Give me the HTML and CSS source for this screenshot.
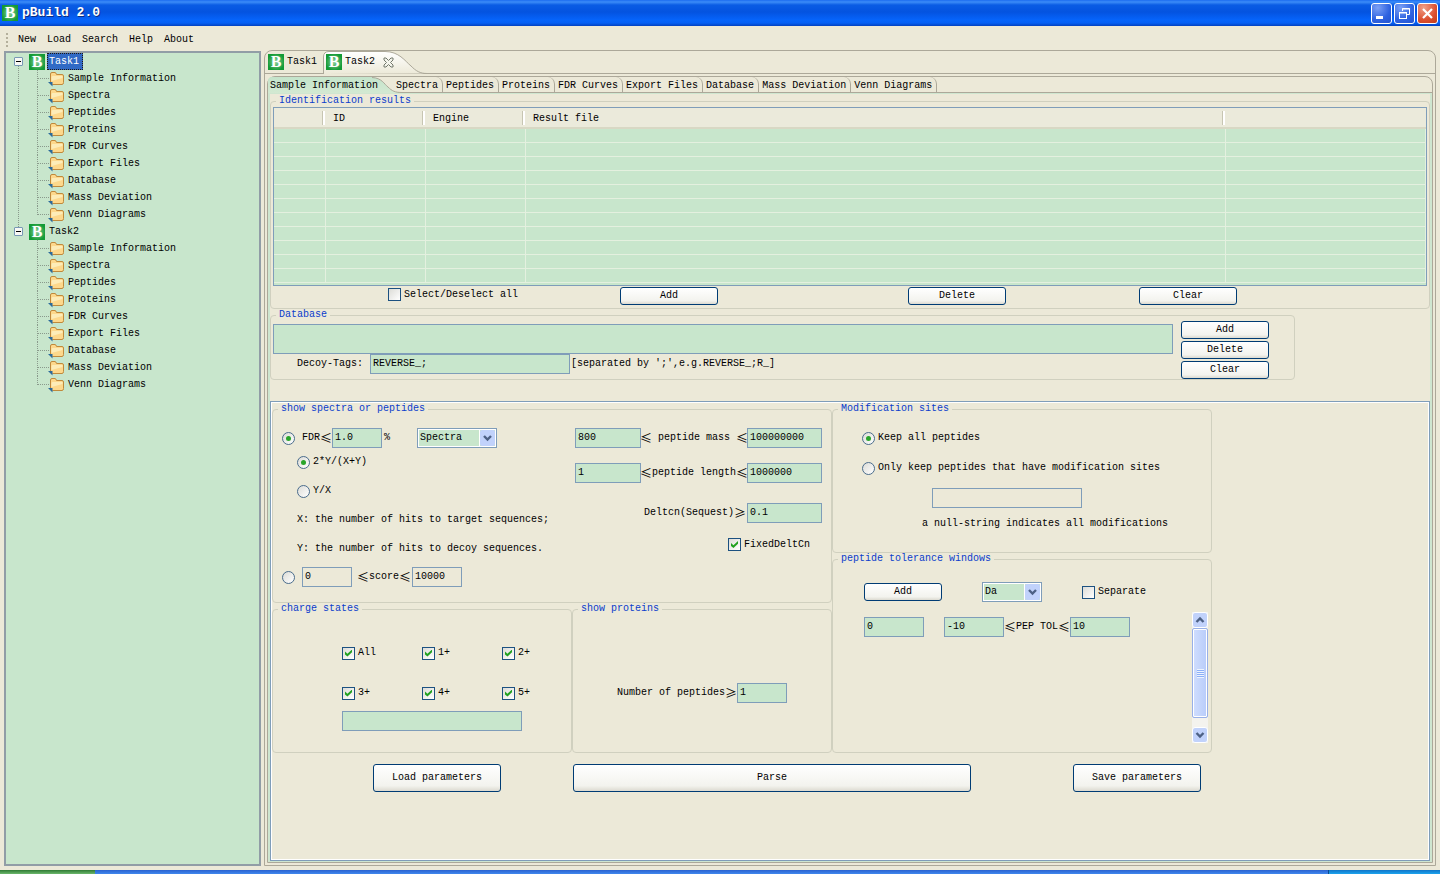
FILE: index.html
```html
<!DOCTYPE html>
<html lang="en">
<head>
    <meta charset="UTF-8">
    <meta name="viewport" content="width=device-width, initial-scale=1.0">
    <title>pBuild 2.0</title>
    <link rel="stylesheet" href="styles.css">
</head>
<body>
    <header class="titlebar">
        <span class="logo">B</span>
        <h1>pBuild 2.0</h1>
        <div class="window-buttons">
            <button type="button" aria-label="Minimize">
                <svg width="19" height="19" viewBox="0 0 19 19"><rect x="4" y="12" width="7" height="3" fill="#fff"/></svg>
            </button>
            <button type="button" aria-label="Restore">
                <svg width="19" height="19" viewBox="0 0 19 19" fill="none" stroke="#fff"><path d="M7.5 7V4.5H14.5V10.5H12M7 5H15" /><rect x="4.500" y="8.500" width="7" height="6"/><path d="M4 9H12"/></svg>
            </button>
            <button type="button" class="close" aria-label="Close">
                <svg width="19" height="19" viewBox="0 0 19 19"><path d="M5 5L14 14M14 5L5 14" stroke="#fff" stroke-width="2.200"/></svg>
            </button>
        </div>
    </header>

    <nav class="menubar">
        <button type="button">New</button>
        <button type="button">Load</button>
        <button type="button">Search</button>
        <button type="button">Help</button>
        <button type="button">About</button>
    </nav>

    <main class="workspace">
        <aside class="tree">
            <ul id="task-tree"></ul>
        </aside>

        <section class="editor">
            <div class="editor-tabs">
                <button type="button" class="editor-tab"><span class="logo">B</span><span>Task1</span></button>
                <button type="button" class="editor-tab active">
                    <svg class="tab-shape" width="104" height="23" viewBox="0 0 104 23">
                        <defs><linearGradient id="tab-fill" x1="0" y1="0" x2="0" y2="1"><stop offset="0" stop-color="#fff"/><stop offset="1" stop-color="#ece9d8"/></linearGradient></defs>
                        <path d="M0.500 23V6Q0.500 0.500 6 0.500H62C76 0.500 82 10 88 15C93 20 97 22.500 104 22.500" fill="url(#tab-fill)" stroke="#aca899"/>
                    </svg>
                    <span class="logo">B</span><span>Task2</span>
                    <svg class="tab-close" width="11" height="11" viewBox="0 0 11 11"><path d="M1 1H3L5.500 3.500L8 1H10V3L7.500 5.500L10 8V10H8L5.500 7.500L3 10H1V8L3.500 5.500L1 3Z" fill="#f4f4ec" stroke="#72786c"/></svg>
                </button>
            </div>

            <div class="pages">
                <div class="page-tabs">
                    <button type="button" class="page-tab active">
                        <svg class="tab-shape" width="134" height="16" viewBox="0 0 134 16">
                            <defs><linearGradient id="page-fill" x1="0" y1="0" x2="0" y2="1"><stop offset="0" stop-color="#c4e4cb"/><stop offset="1" stop-color="#d3e9d2"/></linearGradient></defs>
                            <path d="M0 16V4Q0 0 4 0H104C114 1 116 7 120 10C124 14 127 15.500 134 15.500V16Z" fill="url(#page-fill)"/>
                            <path d="M104 0.500C114 1 116 7 120 10C124 14 127 15.500 134 15.500" fill="none" stroke="#aca899"/>
                        </svg>
                        <span>Sample Information</span>
                    </button>
                    <button type="button" class="page-tab">Spectra</button>
                    <button type="button" class="page-tab">Peptides</button>
                    <button type="button" class="page-tab">Proteins</button>
                    <button type="button" class="page-tab">FDR Curves</button>
                    <button type="button" class="page-tab">Export Files</button>
                    <button type="button" class="page-tab">Database</button>
                    <button type="button" class="page-tab">Mass Deviation</button>
                    <button type="button" class="page-tab">Venn Diagrams</button>
                </div>

                <div class="page">
                    <fieldset>
                        <legend>Identification results</legend>
                        <div class="results">
                            <div class="table-box">
                                <table>
                                    <colgroup>
                                        <col class="col-check"><col class="col-id"><col class="col-engine"><col class="col-file"><col>
                                    </colgroup>
                                    <thead>
                                        <tr><th></th><th>ID</th><th>Engine</th><th>Result file</th><th></th></tr>
                                    </thead>
                                    <tbody id="result-rows"></tbody>
                                </table>
                            </div>
                            <div class="result-actions">
                                <label class="check"><input type="checkbox">Select/Deselect all</label>
                                <button type="button" class="btn">Add</button>
                                <button type="button" class="btn">Delete</button>
                                <button type="button" class="btn">Clear</button>
                            </div>
                        </div>
                    </fieldset>

                    <fieldset class="database-group">
                        <legend>Database</legend>
                        <div class="database">
                            <div class="database-main">
                                <div class="database-list"></div>
                                <div class="decoy">
                                    <label for="decoy-tags">Decoy-Tags:</label>
                                    <input type="text" id="decoy-tags" value="REVERSE_;">
                                    <span class="hint">[separated by ';',e.g.REVERSE_;R_]</span>
                                </div>
                            </div>
                            <div class="database-buttons">
                                <button type="button" class="btn">Add</button>
                                <button type="button" class="btn">Delete</button>
                                <button type="button" class="btn">Clear</button>
                            </div>
                        </div>
                    </fieldset>

                    <form class="params">
                        <div class="groups">
                            <div class="groups-left">
                                <fieldset>
                                    <legend>show spectra or peptides</legend>
                                    <div class="spectra">
                                        <div class="filter">
                                            <div class="row">
                                                <input type="radio" name="filter" id="by-fdr" checked>
                                                <label for="by-fdr" class="fdr-label">FDR<span class="sign">≤</span></label>
                                                <input type="text" class="w50" value="1.0" aria-label="FDR">
                                                <span class="percent">%</span>
                                                <span class="combo combo-spectra">
                                                    <select aria-label="Level"><option>Spectra</option><option>Peptides</option></select>
                                                    <svg width="15" height="16" viewBox="0 0 15 16"><rect width="15" height="16" rx="2" fill="#c1d2fb"/><path d="M4 6L7.500 9.500L11 6" fill="none" stroke="#4d6185" stroke-width="2.400"/></svg>
                                                </span>
                                            </div>
                                            <div class="formula">
                                                <label class="check"><input type="radio" name="formula" checked>2*Y/(X+Y)</label>
                                                <label class="check"><input type="radio" name="formula">Y/X</label>
                                                <p>X: the number of hits to target sequences;</p>
                                                <p>Y: the number of hits to decoy sequences.</p>
                                            </div>
                                            <div class="row score">
                                                <input type="radio" name="filter" id="by-score" aria-label="Filter by score">
                                                <input type="text" class="w50 off" value="0" aria-label="Lowest score">
                                                <label for="by-score"><span class="sign">≤</span>score<span class="sign">≤</span></label>
                                                <input type="text" class="w50 off" value="10000" aria-label="Highest score">
                                            </div>
                                        </div>
                                        <div class="ranges">
                                            <div class="range">
                                                <input type="text" class="w66" id="mass-min" value="800">
                                                <label for="mass-min"><span class="sign">≤</span> peptide mass <span class="sign">≤</span></label>
                                                <input type="text" class="w75" value="100000000" aria-label="Highest peptide mass">
                                            </div>
                                            <div class="range">
                                                <input type="text" class="w66" id="length-min" value="1">
                                                <label for="length-min"><span class="sign">≤</span>peptide length<span class="sign">≤</span></label>
                                                <input type="text" class="w75" value="1000000" aria-label="Highest peptide length">
                                            </div>
                                            <div class="range deltcn">
                                                <label for="deltcn">Deltcn(Sequest)<span class="sign">≥</span></label>
                                                <input type="text" class="w75" id="deltcn" value="0.1">
                                            </div>
                                            <label class="check fixed"><input type="checkbox" checked>FixedDeltCn</label>
                                        </div>
                                    </div>
                                </fieldset>

                                <div class="groups-bottom">
                                    <fieldset class="charge-group">
                                        <legend>charge states</legend>
                                        <div class="charge">
                                            <div class="charge-grid">
                                                <label class="check"><input type="checkbox" checked>All</label>
                                                <label class="check"><input type="checkbox" checked>1+</label>
                                                <label class="check"><input type="checkbox" checked>2+</label>
                                                <label class="check"><input type="checkbox" checked>3+</label>
                                                <label class="check"><input type="checkbox" checked>4+</label>
                                                <label class="check"><input type="checkbox" checked>5+</label>
                                            </div>
                                            <input type="text" class="charge-other" aria-label="Other charge states">
                                        </div>
                                    </fieldset>
                                    <fieldset class="protein-group">
                                        <legend>show proteins</legend>
                                        <div class="proteins">
                                            <div class="row">
                                                <label for="peptide-count">Number of peptides<span class="sign">≥</span></label>
                                                <input type="text" class="w50" id="peptide-count" value="1">
                                            </div>
                                        </div>
                                    </fieldset>
                                </div>
                            </div>

                            <div class="groups-right">
                                <fieldset>
                                    <legend>Modification sites</legend>
                                    <div class="modification">
                                        <label class="check"><input type="radio" name="sites" checked>Keep all peptides</label>
                                        <label class="check"><input type="radio" name="sites">Only keep peptides that have modification sites</label>
                                        <input type="text" class="site-name off" aria-label="Modification sites">
                                        <p>a null-string indicates all modifications</p>
                                    </div>
                                </fieldset>
                                <fieldset>
                                    <legend>peptide tolerance windows</legend>
                                    <div class="tolerance">
                                        <div class="tolerance-body">
                                            <div class="row tolerance-head">
                                                <button type="button" class="btn">Add</button>
                                                <span class="combo combo-unit">
                                                    <select aria-label="Unit"><option>Da</option><option>ppm</option></select>
                                                    <svg width="15" height="16" viewBox="0 0 15 16"><rect width="15" height="16" rx="2" fill="#c1d2fb"/><path d="M4 6L7.500 9.500L11 6" fill="none" stroke="#4d6185" stroke-width="2.400"/></svg>
                                                </span>
                                                <label class="check"><input type="checkbox">Separate</label>
                                            </div>
                                            <div class="row">
                                                <input type="text" class="w60 window-id" value="0" aria-label="Window">
                                                <input type="text" class="w60" id="tol-min" value="-10">
                                                <label for="tol-min"><span class="sign">≤</span>PEP TOL<span class="sign">≤</span></label>
                                                <input type="text" class="w60" value="10" aria-label="Upper tolerance">
                                            </div>
                                        </div>
                                        <div class="scrollbar">
                                            <button type="button" aria-label="Scroll up"><svg width="14" height="14" viewBox="0 0 14 14"><path d="M3.500 9L7 5.500L10.500 9" fill="none" stroke="#4d6185" stroke-width="2.400"/></svg></button>
                                            <div class="thumb"><i></i></div>
                                            <button type="button" aria-label="Scroll down"><svg width="14" height="14" viewBox="0 0 14 14"><path d="M3.500 5L7 8.500L10.500 5" fill="none" stroke="#4d6185" stroke-width="2.400"/></svg></button>
                                        </div>
                                    </div>
                                </fieldset>
                            </div>
                        </div>

                        <div class="param-buttons">
                            <button type="button" class="btn">Load parameters</button>
                            <button type="button" class="btn parse">Parse</button>
                            <button type="button" class="btn">Save parameters</button>
                        </div>
                    </form>
                </div>
            </div>
        </section>
    </main>

    <footer class="taskbar"><span class="start"></span><span class="tray"></span></footer>

    <script src="app.js"></script>
</body>
</html>
```

FILE: styles.css
```css
* {
    box-sizing: border-box;
}

body {
    margin: 0;
    height: 100vh;
    display: flex;
    flex-direction: column;
    overflow: hidden;
    background: #ece9d8;
    color: #000;
    font: 10px/12px "Liberation Mono", "Noto Sans CJK SC", monospace;
}

button, input, select {
    font: inherit;
    color: inherit;
    margin: 0;
}

button {
    padding: 0;
    border: none;
    background: none;
}

p {
    margin: 0;
}

svg {
    display: block;
}

/* Title bar */
.titlebar {
    display: flex;
    align-items: center;
    height: 26px;
    flex: none;
    padding: 0 2px;
    background: linear-gradient(#1c6cf0 0, #3c8cf8 2px, #0a5ce4 5px, #0453e0 12px, #0664fb 20px, #0560f4 23px, #0341c0 26px);
}

.titlebar h1 {
    margin: 0 auto 0 4px;
    color: #fff;
    font-size: 13px;
    line-height: 16px;
    text-shadow: 1px 1px #0a2c80;
}

.logo {
    flex: none;
    width: 16px;
    height: 16px;
    background: radial-gradient(#8fd09a, #139a35 75%);
    color: #fff;
    font: bold 16px/16px "Liberation Serif", serif;
    text-align: center;
}

.window-buttons {
    display: flex;
    gap: 2px;
}

.window-buttons button {
    border: 1px solid #fff;
    border-radius: 3px;
    background: radial-gradient(circle at 30% 20%, #7ba0f5, #2e62e0 60%, #2353cf);
}

.window-buttons .close {
    background: radial-gradient(circle at 30% 20%, #f0a088, #dc5030 60%, #c03c18);
}

/* Menu */
.menubar {
    display: flex;
    align-items: center;
    gap: 11px;
    height: 24px;
    flex: none;
    padding: 4px 0 0 18px;
    position: relative;
}

.menubar::before {
    content: "";
    position: absolute;
    left: 6px;
    top: 7px;
    width: 2px;
    height: 14px;
    background: repeating-linear-gradient(#b4b09c 0 2px, transparent 2px 4px);
}

.workspace {
    display: flex;
    flex: 1;
    min-height: 0;
    gap: 3px;
    padding: 0 4px 4px;
}

/* Task tree */
.tree {
    flex: none;
    width: 257px;
    margin-top: 1px;
    border: 2px solid #919da6;
    background: #c8e6cc;
}

.tree ul {
    margin: 0;
    padding: 0;
    list-style: none;
}

.task, .task li {
    position: relative;
}

.task-row {
    display: flex;
    align-items: center;
    height: 17px;
    padding-left: 8px;
}

.toggle {
    display: flex;
    width: 9px;
    height: 9px;
    margin-right: 6px;
    border: 1px solid #7898b5;
    border-radius: 1px;
    background: #f8f8f4;
    z-index: 1;
}

.toggle svg {
    margin: auto;
}

.task-row .name {
    margin-left: 2px;
    padding: 3px 4px 2px 2px;
}

.task-row .name.selected {
    outline: 1px dotted #201810;
    outline-offset: -1px;
    background: #316ac5;
    color: #fff;
}

.task:not(:last-child)::before {
    content: "";
    position: absolute;
    left: 12px;
    top: 10px;
    height: 100%;
    border-left: 1px dotted #8a9a8c;
}

.task li {
    display: flex;
    align-items: center;
    height: 17px;
    padding-left: 42px;
}

.task li svg {
    margin-right: 2px;
}

.task li::before {
    content: "";
    position: absolute;
    left: 31px;
    top: 0;
    height: 17px;
    border-left: 1px dotted #8a9a8c;
}

.task li:last-child::before {
    height: 9px;
}

.task li::after {
    content: "";
    position: absolute;
    left: 31px;
    top: 8px;
    width: 12px;
    border-top: 1px dotted #8a9a8c;
}

/* Editor tabs */
.editor {
    display: flex;
    flex: 1;
    flex-direction: column;
    min-width: 0;
    border: 1px solid #aca899;
    border-radius: 8px 8px 0 0;
}

.editor-tabs {
    display: flex;
    height: 23px;
    flex: none;
    padding-left: 2px;
    border-bottom: 1px solid #aca899;
}

.editor-tab {
    display: flex;
    align-items: center;
    gap: 3px;
    position: relative;
    padding: 0 6px 0 1px;
}

.editor-tab.active {
    padding-left: 3px;
}

.editor-tab > * {
    position: relative;
}

.tab-shape, .editor-tab > .tab-shape {
    position: absolute;
    left: 0;
    top: 0;
}

.tab-close {
    margin-left: 5px;
}

.pages {
    display: flex;
    flex: 1;
    flex-direction: column;
    min-height: 0;
    margin: 2px;
    border: 1px solid #aca899;
    border-radius: 8px 8px 0 0;
}

.page-tabs {
    display: flex;
    height: 16px;
    flex: none;
    border-bottom: 1px solid #aca899;
}

.page-tab {
    position: relative;
    padding: 2px 4px 0 3px;
    border-right: 1px solid #aca899;
    border-top-right-radius: 7px;
    white-space: nowrap;
}

.page-tab.active {
    padding: 2px 15px 0 2px;
    border: none;
}

.page-tab span {
    position: relative;
}

.page {
    display: flex;
    flex: 1;
    flex-direction: column;
    min-height: 0;
    padding-top: 1px;
    border: solid #cfe6d0;
    border-width: 1px 2px;
}

/* Group boxes */
fieldset {
    min-width: 0;
    margin: 0;
    padding: 0;
    border: 1px solid #d0d0bf;
    border-radius: 4px;
}

legend {
    margin-left: 5px;
    padding: 0 3px;
    color: #0a3ccc;
}

/* Controls */
input[type="text"] {
    flex: none;
    height: 20px;
    padding: 0 2px 2px;
    border: 1px solid #7f9db9;
    border-radius: 0;
    background: #c8e6cc;
}

input[type="text"].off {
    background: #ece9d8;
}

input[type="checkbox"], input[type="radio"] {
    appearance: none;
    display: grid;
    place-content: center;
    flex: none;
    width: 13px;
    height: 13px;
    border: 1px solid #1c5180;
    background: linear-gradient(135deg, #dcdcd7, #fff);
}

input[type="radio"] {
    border-color: #4a6c8c;
    border-radius: 50%;
}

input[type="checkbox"]:checked::after {
    content: "";
    width: 7px;
    height: 7px;
    background: #21a121;
    clip-path: polygon(0 30%, 35% 60%, 100% 0, 100% 40%, 35% 100%, 0 70%);
}

input[type="radio"]:checked::after {
    content: "";
    width: 5px;
    height: 5px;
    border-radius: 50%;
    background: #2aa52a;
}

.check, .row {
    display: flex;
    align-items: center;
}

.check {
    gap: 3px;
}

.row {
    height: 20px;
}

.row label, .range label {
    display: flex;
    align-items: center;
    white-space: pre;
}

.sign {
    width: 12px;
    font: 12px/12px "Noto Sans CJK SC", sans-serif;
    text-align: center;
}

.btn {
    width: 98px;
    height: 18px;
    border: 1px solid #003c74;
    border-radius: 3px;
    background: linear-gradient(#fff, #f3f3ee 80%, #dcdad0);
}

.combo {
    position: relative;
    height: 20px;
}

.combo select {
    appearance: none;
    width: 100%;
    height: 20px;
    padding: 0 2px;
    border: 1px solid #7f9db9;
    border-radius: 0;
    background: #c8e6cc;
    box-shadow: inset 0 0 0 1px #fff;
}

.combo svg {
    position: absolute;
    top: 2px;
    right: 2px;
    outline: 1px solid #fff;
    pointer-events: none;
}

.combo-spectra {
    width: 80px;
    margin-left: 27px;
}

.combo-unit {
    width: 60px;
}

.w50 {
    width: 50px;
}

.w60 {
    width: 60px;
}

.w66 {
    width: 66px;
}

.w75 {
    width: 75px;
}

/* Identification results */
.results {
    padding: 0 2px 3px;
}

.table-box {
    height: 179px;
    overflow: hidden;
    border: 1px solid #7f9db9;
    background: #c8e6cc;
}

table {
    width: 100%;
    table-layout: fixed;
    border-collapse: separate;
    border-spacing: 0;
}

.col-check {
    width: 52px;
}

.col-id, .col-engine {
    width: 100px;
}

.col-file {
    width: 700px;
}

th {
    position: relative;
    height: 21px;
    padding: 2px 0 0 7px;
    border-bottom: 2px solid #d8d8c4;
    background: #ebeadb;
    font-weight: normal;
    text-align: left;
}

th:not(:last-child)::after {
    content: "";
    position: absolute;
    top: 3px;
    right: 1px;
    width: 2px;
    height: 14px;
    border-left: 1px solid #c7c5b2;
    background: #fff;
}

td {
    height: 14px;
    padding: 0;
    border-right: 1px solid #e4f0df;
    border-bottom: 1px solid #e4f0df;
}

.result-actions {
    display: grid;
    grid-template-columns: 232px 288px 231px auto;
    height: 19px;
    padding: 1px 0 0 115px;
}

.result-actions .check {
    height: 15px;
}

/* Database */
.database-group {
    width: 1025px;
}

.database {
    display: flex;
    gap: 8px;
    padding-left: 2px;
}

.database-main {
    width: 900px;
}

.database-list {
    height: 30px;
    margin-top: 3px;
    border: 1px solid #7f9db9;
    background: #c8e6cc;
}

.decoy {
    display: flex;
    align-items: center;
    padding-left: 24px;
    white-space: nowrap;
}

.decoy input {
    width: 200px;
    margin: 0 1px 0 7px;
}

.database-buttons {
    display: flex;
    flex-direction: column;
    gap: 2px;
}

.database-buttons .btn {
    width: 88px;
}

/* Parameters */
.params {
    flex: 1;
    margin-top: 21px;
    padding: 1px 0 0 1px;
    border: 1px solid #7f9db9;
    box-shadow: inset 0 0 0 1px #fff;
}

.groups {
    display: flex;
}

.groups-left {
    width: 560px;
}

.groups-right {
    width: 380px;
}

.groups-bottom {
    display: flex;
}

.charge-group {
    width: 300px;
}

.protein-group {
    width: 260px;
}

.spectra {
    display: flex;
    justify-content: space-between;
    height: 187px;
    padding: 13px 9px 0;
}

.fdr-label {
    margin-left: 7px;
}

.percent {
    margin-left: 2px;
}

.formula {
    display: grid;
    grid-auto-rows: 20px;
    align-items: center;
    gap: 9px;
    margin: 4px 0 8px 15px;
}

.score input[type="radio"] {
    margin-right: 7px;
}

.score label {
    margin: 0 1px 0 5px;
}

.ranges {
    display: flex;
    flex-direction: column;
    gap: 15px;
    width: 247px;
}

.range {
    display: flex;
    align-items: center;
    justify-content: space-between;
}

.range label {
    margin: 0 -1px;
}

.deltcn {
    justify-content: flex-end;
    gap: 2px;
    margin-top: 5px;
}

.fixed {
    margin-left: 153px;
}

.charge {
    height: 137px;
    padding: 28px 0 0 69px;
}

.charge-grid {
    display: grid;
    grid-template-columns: repeat(3, 80px);
    grid-auto-rows: 20px;
    gap: 20px 0;
}

.charge-other {
    display: block;
    width: 180px;
    margin-top: 8px;
}

.proteins {
    height: 137px;
    padding: 68px 0 0 44px;
}

.modification {
    height: 137px;
    padding: 13px 0 0 29px;
}

.modification .check {
    height: 20px;
    margin-bottom: 10px;
}

.site-name {
    display: block;
    width: 150px;
    margin: 0 0 10px 70px;
}

.modification p {
    padding-left: 60px;
}

.tolerance {
    display: flex;
    justify-content: space-between;
    height: 187px;
    padding: 17px 3px 8px 31px;
}

.tolerance-head {
    gap: 40px;
    margin-bottom: 15px;
}

.tolerance-head .btn {
    width: 78px;
}

.window-id {
    margin-right: 20px;
}

.scrollbar {
    display: flex;
    flex-direction: column;
    width: 16px;
    height: 131px;
    margin-top: 30px;
    background: #f4f3ee;
}

.scrollbar button {
    border: 1px solid #fff;
    border-radius: 3px;
    background: #c1d2fb;
}

.thumb {
    display: flex;
    height: 90px;
    margin-bottom: auto;
    border: 1px solid #98b0e8;
    border-radius: 2px;
    background: linear-gradient(90deg, #d0defe, #b8ccfa);
    box-shadow: inset 0 0 0 1px #fff;
}

.thumb i {
    width: 7px;
    height: 9px;
    margin: auto;
    background: repeating-linear-gradient(#eef4fe 0 1px, #8cb0f8 1px 2px);
}

.param-buttons {
    display: grid;
    grid-template-columns: 200px 500px 128px;
    margin: 11px 0 0 101px;
}

.param-buttons .btn {
    width: 128px;
    height: 28px;
}

.param-buttons .parse {
    width: 398px;
}

/* Task bar edge */
.taskbar {
    display: flex;
    justify-content: space-between;
    height: 4px;
    flex: none;
    background: linear-gradient(#2a62d0, #4088ee);
}

.start {
    width: 95px;
    background: linear-gradient(#2f7a34, #6cb86c);
}

.tray {
    width: 112px;
    border-left: 1px solid #0a4a90;
    background: linear-gradient(#1074c8, #1ca4ee);
}
```

FILE: app.js
```js
const pages = ['Sample Information', 'Spectra', 'Peptides', 'Proteins', 'FDR Curves',
    'Export Files', 'Database', 'Mass Deviation', 'Venn Diagrams'];

const folder = `<svg width="18" height="16" viewBox="0 0 18 16">
    <path d="M2.5 3Q2.500 1.500 4 1.500H7Q8 1.500 8.500 3.500H14Q15.500 3.500 15.500 5V11.500Q15.500 13.500 14 13.500H4.500Q2.500 13.500 2.500 11.500Z" fill="#fdd88c" stroke="#c08a3c"/>
    <path d="M3.500 6Q3.500 5 5 5H14.500V7L3.500 10Z" fill="#fdecb8"/>
    <path d="M0 11H4.500V15.500Z" fill="#2c6a9a"/></svg>`;

function addTask(name, selected) {
    const task = document.createElement('li');
    task.className = 'task';
    task.innerHTML = `
        <div class="task-row">
            <button type="button" class="toggle" aria-label="Collapse ${name}">
                <svg width="5" height="1"><rect width="5" height="1"/></svg>
            </button>
            <span class="logo">B</span>
            <span class="name${selected ? ' selected' : ''}">${name}</span>
        </div>
        <ul>${pages.map(page => `<li>${folder}${page}</li>`).join('')}</ul>`;
    document.getElementById('task-tree').appendChild(task);
}

addTask('Task1', true);
addTask('Task2', false);

// Empty rows keep the grid lines visible
document.getElementById('result-rows').innerHTML =
    '<tr><td></td><td></td><td></td><td></td><td></td></tr>'.repeat(11);
```
